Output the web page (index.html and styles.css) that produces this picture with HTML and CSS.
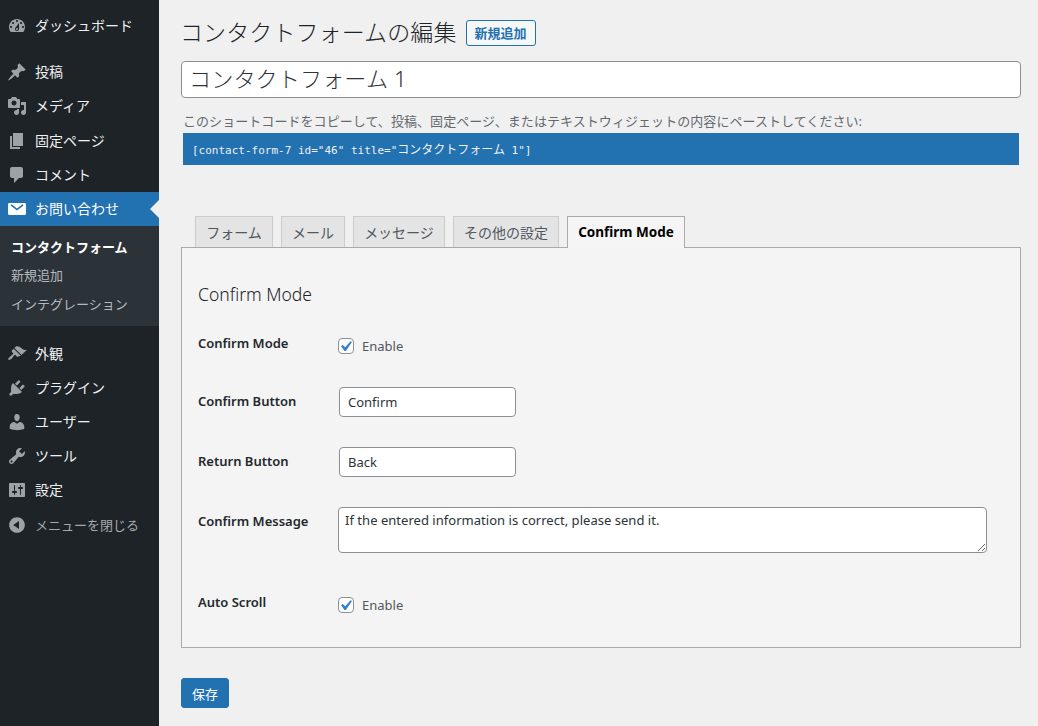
FILE: index.html
```html
<!DOCTYPE html>
<html lang="ja">
<head>
<meta charset="UTF-8">
<meta name="viewport" content="width=device-width, initial-scale=1.0">
<title>コンタクトフォームの編集</title>
<link rel="stylesheet" href="styles.css">
</head>
<body>
    <!-- 管理メニュー -->
    <div class="sidebar">
        <ul class="menu">
            <li class="menu-item"><svg class="menu-icon" viewBox="0 0 20 20"><path d="M3.76 16h12.48c1.1-1.37 1.76-3.11 1.76-5 0-4.42-3.58-8-8-8s-8 3.58-8 8c0 1.89.66 3.63 1.76 5zM10 4c.55 0 1 .45 1 1s-.45 1-1 1-1-.45-1-1 .45-1 1-1zM6 6c.55 0 1 .45 1 1s-.45 1-1 1-1-.45-1-1 .45-1 1-1zm8 0c.55 0 1 .45 1 1s-.45 1-1 1-1-.45-1-1 .45-1 1-1zm-5.37 5.55L12 7v6c0 1.1-.9 2-2 2s-2-.9-2-2c0-.57.24-1.08.63-1.45zM4 10c.55 0 1 .45 1 1s-.45 1-1 1-1-.45-1-1 .45-1 1-1zm12 0c.55 0 1 .45 1 1s-.45 1-1 1-1-.45-1-1 .45-1 1-1zm-5 3c0-.55-.45-1-1-1s-1 .45-1 1 .45 1 1 1 1-.45 1-1z"/></svg>ダッシュボード</li>
        </ul>
        <ul class="menu menu-group">
            <li class="menu-item"><svg class="menu-icon" viewBox="0 0 20 20"><path d="M10.44 3.02l1.82-1.82 6.36 6.35-1.83 1.82c-1.05-.68-2.48-.57-3.41.36l-.75.75c-.92.93-1.04 2.35-.35 3.41l-1.83 1.82-2.41-2.41-2.8 2.79c-.42.42-3.38 2.71-3.8 2.29s1.86-3.39 2.28-3.81l2.79-2.79L4.1 9.36l1.83-1.82c1.05.69 2.48.57 3.4-.36l.75-.75c.93-.92 1.05-2.35.36-3.41z"/></svg>投稿</li>
            <li class="menu-item"><svg class="menu-icon" viewBox="0 0 20 20"><path d="M13 11V4c0-.55-.45-1-1-1h-1.67L9 1H5L3.67 3H2c-.55 0-1 .45-1 1v7c0 .55.45 1 1 1h10c.55 0 1-.45 1-1zM7 4.5c1.38 0 2.5 1.12 2.5 2.5S8.38 9.5 7 9.5 4.5 8.38 4.5 7 5.62 4.5 7 4.5zM14 6h5v10.5c0 1.38-1.12 2.5-2.5 2.5S14 17.88 14 16.5s1.12-2.5 2.5-2.5c.17 0 .34.02.5.05V9h-3V6zm-4 8.05V13h2v3.5c0 1.38-1.12 2.5-2.5 2.5S7 17.88 7 16.5 8.12 14 9.5 14c.17 0 .34.02.5.05z"/></svg>メディア</li>
            <li class="menu-item menu-spaced"><svg class="menu-icon" viewBox="0 0 20 20"><path d="M6 15V2h10v13H6zm-1 1h8v2H3V5h2v11z"/></svg>固定ページ</li>
            <li class="menu-item"><svg class="menu-icon" viewBox="0 0 20 20"><path d="M5 2h9c1.1 0 2 .9 2 2v7c0 1.1-.9 2-2 2h-2l-5 5v-5H5c-1.1 0-2-.9-2-2V4c0-1.1.9-2 2-2z"/></svg>コメント</li>
            <li class="menu-item menu-current"><svg class="menu-icon" viewBox="0 0 20 20"><path fill-rule="evenodd" d="M2.5 4h15c.83 0 1.5.67 1.5 1.5v9c0 .83-.67 1.5-1.5 1.5h-15c-.83 0-1.5-.67-1.500-1.500v-9C1 4.670 1.670 4 2.500 4zM3.500 6.400L10 11.600l6.500-5.200-1-1.200L10 9.500 4.500 5.200z"/></svg>お問い合わせ</li>
        </ul>
        <ul class="submenu">
            <li class="submenu-item submenu-current">コンタクトフォーム</li>
            <li class="submenu-item">新規追加</li>
            <li class="submenu-item">インテグレーション</li>
        </ul>
        <ul class="menu menu-group">
            <li class="menu-item"><svg class="menu-icon" viewBox="0 0 20 20"><path d="M14.480 11.060L7.410 3.990l1.500-1.500c.5-.56 2.300-.47 3.510.32 1.210.8 1.430 1.280 2.910 2.100 1.180.64 2.450 1.260 4.670.85zm-.71.71L6.700 4.700 4.930 6.470c-.39.39-.39 1.020 0 1.410l1.060 1.060c.39.39.39 1.030 0 1.420-.6.6-1.430 1.110-2.210 1.690-.35.26-.7.53-1.010.84C1.430 13.710.96 15.120 1.500 15.700c.56.58 1.980.15 3.300-1.160.31-.31.58-.66.84-1.010.58-.78 1.090-1.610 1.690-2.210.39-.39 1.020-.39 1.410 0l1.060 1.060c.39.39 1.020.39 1.410 0z"/></svg>外観</li>
            <li class="menu-item"><svg class="menu-icon" viewBox="0 0 20 20"><path d="M13.110 4.360L9.870 7.600 8 5.730l3.240-3.240c.35-.34 1.050-.2 1.560.32.52.51.66 1.210.31 1.550zm-8 1.770l.91-1.120 9.010 9.010-1.190.84c-.71.71-2.630 1.160-3.820 1.160H6.140L4.900 17.260c-.59.59-1.540.59-2.120 0-.59-.58-.59-1.530 0-2.120l1.240-1.240v-3.880c0-1.130.4-3.190 1.090-3.890zm7.260 3.970l3.240-3.240c.34-.35 1.040-.21 1.550.31.52.51.66 1.210.31 1.550l-3.240 3.250z"/></svg>プラグイン</li>
            <li class="menu-item"><svg class="menu-icon" viewBox="0 0 20 20"><path d="M10 9.250c-2.270 0-2.730-3.440-2.730-3.440C7 4.020 7.820 2 9.970 2c2.160 0 2.980 2.020 2.710 3.810 0 0-.41 3.440-2.680 3.440zm0 2.570L12.720 10c2.390 0 4.520 2.330 4.520 4.530v2.490s-3.650 1.130-7.240 1.130c-3.650 0-7.240-1.130-7.240-1.130v-2.490c0-2.250 1.940-4.480 4.470-4.480z"/></svg>ユーザー</li>
            <li class="menu-item"><svg class="menu-icon" viewBox="0 0 20 20"><path d="M16.680 9.770c-1.340 1.340-3.300 1.670-4.950.99l-5.410 6.520c-.99.99-2.590.99-3.580 0s-.99-2.590 0-3.570l6.520-5.420c-.68-1.650-.35-3.610.99-4.950 1.280-1.280 3.120-1.620 4.720-1.060l-2.890 2.890 2.820 2.820 2.860-2.870c.53 1.580.18 3.390-1.080 4.650zM3.810 16.210c.4.39 1.040.39 1.430 0 .4-.4.4-1.040 0-1.430-.39-.4-1.030-.4-1.430 0-.39.39-.39 1.030 0 1.430z"/></svg>ツール</li>
            <li class="menu-item"><svg class="menu-icon" viewBox="0 0 20 20"><path d="M18 16V4c0-.55-.45-1-1-1H3c-.55 0-1 .45-1 1v12c0 .55.45 1 1 1h14c.55 0 1-.45 1-1zM8 11h1c.55 0 1 .45 1 1s-.45 1-1 1H8v1.500c0 .28-.22.5-.5.5s-.5-.22-.5-.5V13H6c-.55 0-1-.45-1-1s.45-1 1-1h1V5.500c0-.28.22-.5.5-.5s.5.22.5.5V11zm5-2h-1c-.55 0-1-.45-1-1s.45-1 1-1h1V5.500c0-.28.22-.5.5-.5s.5.22.5.5V7h1c.55 0 1 .45 1 1s-.45 1-1 1h-1v5.500c0 .28-.22.5-.5.5s-.5-.22-.5-.5V9z"/></svg>設定</li>
            <li class="menu-item menu-spaced menu-collapse"><svg class="menu-icon" viewBox="0 0 20 20"><path d="M10 2.160c4.330 0 7.840 3.510 7.840 7.840s-3.510 7.840-7.840 7.840S2.160 14.330 2.160 10 5.710 2.160 10 2.160zm2 11.720V6.120L6.180 9.970z"/></svg>メニューを閉じる</li>
        </ul>
    </div>

    <!-- 編集画面 -->
    <div class="content">
        <div class="title-row">
            <h1 class="page-title">コンタクトフォームの編集</h1>
            <a class="add-new">新規追加</a>
        </div>
        <input class="title-input" type="text" value="コンタクトフォーム 1">
        <p class="shortcode-note">このショートコードをコピーして、投稿、固定ページ、またはテキストウィジェットの内容にペーストしてください:</p>
        <div class="shortcode">[contact-form-7 id="46" title="<span class="shortcode-jp">コンタクトフォーム</span> 1"]</div>

        <ul class="tabs">
            <li class="tab">フォーム</li>
            <li class="tab">メール</li>
            <li class="tab">メッセージ</li>
            <li class="tab">その他の設定</li>
            <li class="tab tab-active">Confirm Mode</li>
        </ul>
        <div class="panel">
            <h2 class="panel-title">Confirm Mode</h2>
            <div class="row row-check row-first">
                <div class="row-label">Confirm Mode</div>
                <label class="check-label"><span class="check"><svg viewBox="0 0 20 20"><path d="M14.830 4.890l1.340.94-5.810 8.380H9.020L5.780 9.670l1.340-1.250 2.570 2.400z"/></svg></span>Enable</label>
            </div>
            <div class="row row-text">
                <div class="row-label">Confirm Button</div>
                <input class="text-input" type="text" value="Confirm">
            </div>
            <div class="row row-text">
                <div class="row-label">Return Button</div>
                <input class="text-input" type="text" value="Back">
            </div>
            <div class="row row-area">
                <div class="row-label">Confirm Message</div>
                <textarea class="text-area">If the entered information is correct, please send it.</textarea>
            </div>
            <div class="row row-check row-last">
                <div class="row-label">Auto Scroll</div>
                <label class="check-label"><span class="check"><svg viewBox="0 0 20 20"><path d="M14.830 4.890l1.340.94-5.810 8.380H9.020L5.780 9.670l1.340-1.250 2.570 2.400z"/></svg></span>Enable</label>
            </div>
        </div>
        <button class="save-button">保存</button>
    </div>
</body>
</html>
```

FILE: styles.css
```css
html, body {
    height: 100%;
}
body {
    font-family: "Noto Sans", "Noto Sans CJK JP", sans-serif;
    font-size: 13px;
    background-color: #f0f0f1;
    color: #3c434a;
    display: flex;
    margin: 0;
    overflow: hidden;
}
ul {
    list-style: none;
    margin: 0;
    padding: 0;
}

/* 管理メニュー */
.sidebar {
    width: 159px;
    flex-shrink: 0;
    background-color: #1d2327;
    padding-top: 9px;
}
.menu-group {
    margin-top: 12px;
}
.submenu + .menu-group {
    margin-top: 11px;
}
.menu-item {
    display: flex;
    align-items: center;
    height: 34px;
    box-sizing: border-box;
    padding: 0 0 2px 7px;
    font-size: 14px;
    color: #f0f0f1;
    position: relative;
}
.menu-spaced {
    margin-top: 1px;
}
.menu-icon {
    width: 20px;
    height: 20px;
    margin: 2px 8px 0 0;
    fill: #9ca2a7;
    flex-shrink: 0;
}
.menu-current {
    background-color: #2271b1;
    color: #ffffff;
}
.menu-current .menu-icon {
    fill: #ffffff;
}
/* 現在のページを示す矢印 */
.menu-current::after {
    content: "";
    position: absolute;
    right: 0;
    top: 8px;
    border: 9px solid transparent;
    border-right-color: #f0f0f1;
    border-left-width: 0;
}
.menu-collapse {
    color: #a7aaad;
    font-size: 13px;
}
.submenu {
    background-color: #2c3338;
    padding: 7px 0 0;
    height: 100px;
    box-sizing: border-box;
}
.submenu-item {
    height: 28.3px;
    line-height: 28px;
    padding-left: 11px;
    color: #b4b9be;
}
.submenu-current {
    color: #ffffff;
    font-weight: 700;
}

/* 編集画面 */
.content {
    flex: 1;
    padding: 0 17px 0 22px;
}
.title-row {
    display: flex;
    align-items: center;
    height: 61px;
    padding-top: 5px;
    box-sizing: border-box;
}
.page-title {
    font-size: 23px;
    font-weight: 300;
    letter-spacing: 0.1px;
    color: #1d2327;
    margin: 0 9px 4px -1px;
}
.add-new {
    border: 1px solid #2271b1;
    border-radius: 3px;
    background-color: #f6f7f7;
    color: #2271b1;
    height: 26px;
    line-height: 24px;
    box-sizing: border-box;
    padding: 0 8px;
    font-weight: 600;
    font-size: 13px;
}
.title-input {
    display: block;
    width: 100%;
    height: 37px;
    box-sizing: border-box;
    border: 1px solid #8c8f94;
    border-radius: 4px;
    background-color: #ffffff;
    color: #2c3338;
    font-family: inherit;
    font-size: 22.1px;
    font-weight: 300;
    letter-spacing: 0.1px;
    padding: 0 7px 5px;
    outline: none;
}
.shortcode-note {
    margin: 13px 2px 0;
    height: 22px;
    line-height: 20px;
    color: #646970;
    white-space: nowrap;
    letter-spacing: 0.06px;
}
.shortcode {
    margin: 0 2px;
    height: 32px;
    box-sizing: border-box;
    line-height: 32px;
    padding: 1px 0 0 9px;
    background-color: #2271b1;
    color: #f0f0f1;
    font-family: "DejaVu Sans Mono", "Noto Sans CJK JP", monospace;
    font-size: 11px;
}
.shortcode-jp {
    font-size: 12px;
}
.tabs {
    display: grid;
    grid-template-columns: 78px 64px 92px 106px 118px;
    gap: 8px;
    margin-top: 51px;
    padding-left: 14px;
    height: 32px;
    position: relative;
    z-index: 1;
}
.tab {
    height: 31px;
    line-height: 31px;
    box-sizing: border-box;
    text-align: center;
    border: 1px solid #ccc;
    border-bottom: none;
    background-color: #e4e4e4;
    color: #50575e;
    font-size: 14px;
}
.tab-active {
    height: 32px;
    background-color: #f5f5f5;
    border-color: #aaa;
    color: #000000;
    font-size: 13.5px;
    font-weight: 700;
}
.panel {
    margin-top: -1px;
    height: 401px;
    box-sizing: border-box;
    border: 1px solid #aaa;
    background-color: #f4f4f4;
    padding: 0 33px 0 16px;
}
.panel-title {
    font-size: 17.5px;
    font-weight: 300;
    color: #1d2327;
    margin: 36px 0 0;
    height: 24px;
    line-height: 20px;
}
.row {
    display: flex;
}
.row-label {
    width: 141px;
    flex-shrink: 0;
    font-weight: 600;
    color: #23282d;
    line-height: 18px;
}
.row-check {
    height: 33px;
}
.row-first {
    margin-top: 26px;
}
.row-text {
    margin-top: 25px;
    height: 35px;
}
.row-first + .row-text {
    margin-top: 20px;
}
.row-text .row-label, .row-area .row-label {
    padding-top: 5px;
}
.row-area {
    margin-top: 25px;
    height: 46px;
}
.row-last {
    margin-top: 40px;
}
.check-label {
    display: flex;
    align-items: center;
    height: 16px;
    margin: 4px 0 0 -1px;
    color: #50575e;
}
.check {
    width: 16px;
    height: 16px;
    box-sizing: border-box;
    border: 1px solid #8c8f94;
    border-radius: 4px;
    background-color: #ffffff;
    margin-right: 8px;
}
.check svg {
    display: block;
    width: 21px;
    height: 21px;
    margin: -3px 0 0 -4px;
    fill: #3582c4;
}
.text-input {
    width: 177px;
    height: 30px;
    box-sizing: border-box;
    border: 1px solid #8c8f94;
    border-radius: 4px;
    background-color: #ffffff;
    color: #2c3338;
    font-family: inherit;
    font-size: 13px;
    padding: 0 8px;
    outline: none;
}
.text-area {
    width: 649px;
    height: 46px;
    margin-left: -1px;
    box-sizing: border-box;
    border: 1px solid #8c8f94;
    border-radius: 4px;
    background-color: #ffffff;
    color: #2c3338;
    font-family: inherit;
    font-size: 13px;
    line-height: 18px;
    letter-spacing: 0.03px;
    padding: 3px 6px 0;
    outline: none;
}
.save-button {
    display: block;
    margin-top: 30px;
    width: 48px;
    height: 30px;
    border: 1px solid #2271b1;
    border-radius: 3px;
    background-color: #2271b1;
    color: #ffffff;
    font-family: inherit;
    font-size: 13px;
    padding: 0;
}
```
